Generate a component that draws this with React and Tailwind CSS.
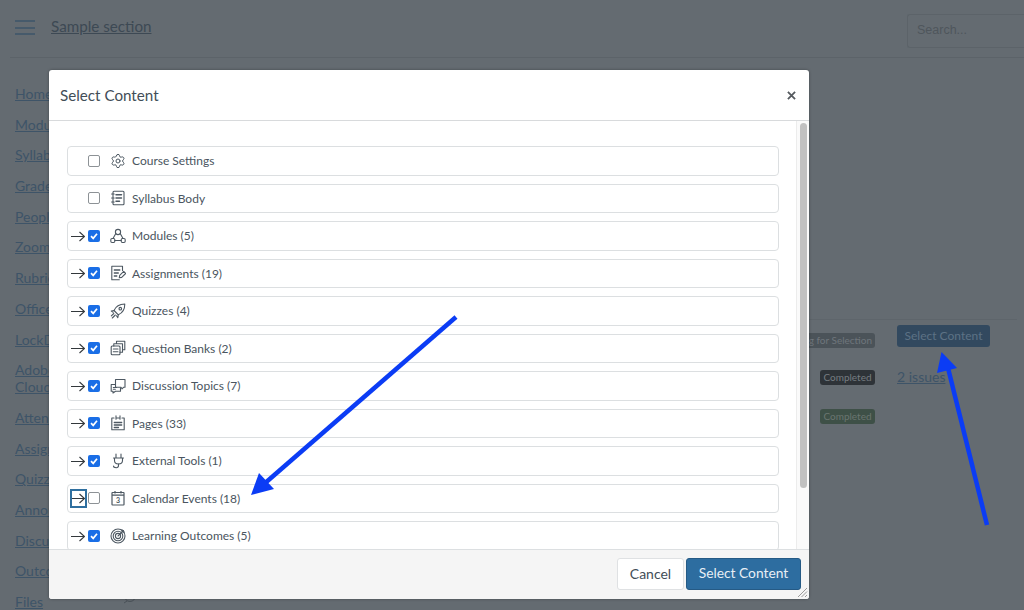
import { Settings } from "lucide-react";

const navItems = [
  ["Home"], ["Modules"], ["Syllabus"], ["Grades"], ["People"], ["Zoom"], ["Rubrics"], ["Office Hours"],
  ["LockDown Browser"], ["Adobe", "Cloud"], ["Attendance"], ["Assignments"], ["Quizzes"], ["Announcements"],
  ["Discussions"], ["Outcomes"], ["Files"],
];

const S = ({ children }) => (
  <svg width="16" height="16" viewBox="0 0 16 16" fill="none" stroke="#4d5862" strokeWidth="1.1" strokeLinecap="round" strokeLinejoin="round">
    {children}
  </svg>
);

const Gear = () => <Settings size={16} color="#4d5862" strokeWidth={1.5} />;
const Syllabus = () => (
  <S>
    <rect x="3" y="1.2" width="11" height="13.6" rx="1" />
    <path d="M1.6 4h2.6M1.6 8h2.6M1.6 12h2.6" />
    <path d="M6 4.8h5.5M6 8h5.5M6 11.200h3.5" strokeWidth="1.5" />
  </S>
);
const Modules = () => (
  <S>
    <circle cx="8" cy="4" r="2.6" />
    <rect x="0.8" y="10.5" width="4" height="4" rx="1.2" />
    <rect x="11.2" y="10.5" width="4" height="4" rx="1.2" />
    <path d="M5.8 5.500 3 10.500M10.200 5.500l2.800 5M4.800 12.500h6.400" />
  </S>
);
const Assignments = () => (
  <S>
    <path d="M12.500 5.500V1.300H1.800v13.400h7.500" />
    <path d="M4.300 5h5.500M4.300 8h4M4.300 11h2.500" strokeWidth="1.3" />
    <path d="m9.300 12.800.400-2.400 4-4 2 2-4 4z" />
  </S>
);
const Rocket = () => (
  <S>
    <path d="M5.500 9 4 7.500c1.500-3.500 5-6.300 10.800-6.500 0 5.800-3 9.300-6.500 10.800z" />
    <circle cx="10.300" cy="5.700" r="1.300" />
    <path d="M4.200 7.500 1.300 8l1.900 1.300M8.300 11.800l-.5 2.900-1.300-1.900M3.800 10.500 1.300 12.800M5.300 12l-3 3" />
  </S>
);
const Banks = () => (
  <S>
    <rect x="1.200" y="6" width="8.800" height="8.800" rx="1" />
    <path d="M3.800 6V3.700h8.700v8.600H10M6.500 3.700V1.300h8.300v8.500h-2.300" />
    <path d="M3.300 9h4.700M3.300 11.700h4.700" />
  </S>
);
const Discussion = () => (
  <S>
    <path d="M5.500 6.500H1.200v6.700h1.800v1.800l2.500-1.800h5V9.800" />
    <path d="M5.500 1.500h9.500v7.800h-1.500l-1.500 1.500-1-1.500H5.500z" />
    <path d="M3.300 9.500h3.200M3.300 11.200h2" />
  </S>
);
const Pages = () => (
  <S>
    <path d="M4 3H1.800v11.800h12.400V3H12" />
    <path d="M6 .9v3.400M10 .9v3.400M6 3h4" />
    <path d="M4.300 7.500h7.400M4.300 10h7.400M4.300 12.500h4.200" strokeWidth="1.3" />
  </S>
);
const Plug = () => (
  <S>
    <path d="M6 1v4M11 1v4M3.500 5h10M4.500 5v2.500c0 2 1.800 3.500 4 3.500s4-1.500 4-3.500V5" />
    <path d="M8.500 11v1.500c0 1.500-1 2.200-2.200 2.200S3.500 14 3.500 13" />
  </S>
);
const Calendar = () => (
  <svg width="16" height="16" viewBox="0 0 16 16" fill="none" stroke="#4d5862" strokeWidth="1.200">
    <rect x="2" y="2.500" width="12" height="12.500" rx="0.500" />
    <path d="M2 5.200h12M5 1v2.500M11 1v2.500" />
    <text x="8" y="13" textAnchor="middle" fontSize="7" fontWeight="700" fill="#4d5862" stroke="none" fontFamily="Lato, sans-serif">3</text>
  </svg>
);
const Target = () => (
  <S>
    <circle cx="8" cy="8" r="7" />
    <circle cx="8" cy="8" r="4.800" />
    <circle cx="8" cy="8" r="2.600" />
    <path d="M8 8l5.500-5.500M12 1.500V4h2.500" />
  </S>
);

const rows = [
  { label: "Course Settings", Icon: Gear, mark: false, checked: false },
  { label: "Syllabus Body", Icon: Syllabus, mark: false, checked: false },
  { label: "Modules (5)", Icon: Modules, mark: true, checked: true },
  { label: "Assignments (19)", Icon: Assignments, mark: true, checked: true },
  { label: "Quizzes (4)", Icon: Rocket, mark: true, checked: true },
  { label: "Question Banks (2)", Icon: Banks, mark: true, checked: true },
  { label: "Discussion Topics (7)", Icon: Discussion, mark: true, checked: true },
  { label: "Pages (33)", Icon: Pages, mark: true, checked: true },
  { label: "External Tools (1)", Icon: Plug, mark: true, checked: true },
  { label: "Calendar Events (18)", Icon: Calendar, mark: true, checked: false, focus: true },
  { label: "Learning Outcomes (5)", Icon: Target, mark: true, checked: true },
];

const Mark = () => (
  <svg width="14" height="11" viewBox="0 0 14 11" fill="none" stroke="#33383c" strokeWidth="1.1">
    <path d="M0 5.500h13.500M8.500 1l5 4.500-5 4.500" />
  </svg>
);

const Check = ({ checked }) =>
  checked ? (
    <span className="flex h-[12px] w-[12px] shrink-0 items-center justify-center rounded-[2px] bg-[#1a6ee6]">
      <svg width="10" height="10" viewBox="0 0 10 10" fill="none" stroke="#fff" strokeWidth="1.7">
        <path d="M2 5.200 4.200 7.400 8 2.800" />
      </svg>
    </span>
  ) : (
    <span className="h-[12px] w-[12px] shrink-0 rounded-[2px] border border-[#8d9296] bg-white" />
  );

const Row = ({ label, Icon, mark, checked, focus }) => (
  <div className="relative flex h-[29.5px] shrink-0 items-center rounded-[4px] border border-[#dcdfe1] bg-white pl-[20px]">
    {mark && (
      <span className="absolute left-[3px] top-[8.5px]">
        <Mark />
      </span>
    )}
    {focus && <span className="absolute left-[2px] top-[4px] h-[19px] w-[17px] border-2 border-[#2f6f9f]" />}
    <Check checked={checked} />
    <span className="ml-[10px] flex w-[16px] justify-center">
      <Icon />
    </span>
    <span className="ml-[6px] pt-[1px] text-[12px] text-[#4a5560]">{label}</span>
  </div>
);

export default function App() {
  return (
    <div className="relative h-[610px] w-[1024px] overflow-hidden bg-[#646b71] font-['Lato',sans-serif]">
      {/* dimmed page */}
      <header className="ml-[10px] flex h-[58px] items-center border-b border-[#5c6369] pl-[5px]">
        <div className="mb-[2px] mr-[1px] flex w-[20px] flex-col gap-[4.5px]">
          <span className="h-[2px] bg-[#465a6b]" />
          <span className="h-[2px] bg-[#465a6b]" />
          <span className="h-[2px] bg-[#465a6b]" />
        </div>
        <a className="mb-[4px] ml-[15px] text-[15.2px] text-[#3d4954] underline">Sample section</a>
        <div className="ml-auto mt-[4px] flex h-[34px] w-[117px] items-center rounded-l-[3px] border border-r-0 border-[#5c6369] pl-[9px] font-['Liberation_Sans',sans-serif] text-[12.5px] text-[#4f565c]">
          Search...
        </div>
      </header>

      <main className="flex">
        <nav className="ml-[15px] flex w-[122px] flex-col gap-[13.7px] pt-[27px]">
          {navItems.map((lines) => (
            <div key={lines[0]} className="flex items-start justify-between">
              <a className="text-[14px] leading-[17px] text-[#3e5468] underline">
                {lines.map((l) => (
                  <span key={l} className="block whitespace-nowrap">{l}</span>
                ))}
              </a>
              {lines[0] === "Files" && (
                <svg className="mt-[-3px]" width="14" height="14" viewBox="0 0 14 14" fill="none" stroke="#4a5259" strokeWidth="1">
                  <circle cx="7" cy="6" r="5.500" />
                  <path d="M4 11 1 13M3 6h8" />
                </svg>
              )}
            </div>
          ))}
        </nav>
        <section className="ml-auto w-[220px] pr-[7px] pt-[261px]">
          <div className="border-t border-[#5e656b] pt-[5px]">
            <div className="flex h-[22px] items-center justify-end pr-[27px]">
              <span className="mt-[8px] flex h-[15px] items-center rounded-[3px] bg-[#4b5359] px-[3px] text-[10px] whitespace-nowrap text-[#6f767c]">
                Waiting for Selection
              </span>
              <span className="ml-[22px] flex h-[22px] w-[93px] shrink-0 items-center justify-center rounded-[3px] bg-[#32495f] text-[12px] text-[#5d7285]">
                Select Content
              </span>
            </div>
            <div className="mt-[20px] flex h-[20px] items-center">
              <span className="ml-[16px] flex h-[15px] w-[55px] items-center justify-center rounded-[3px] bg-[#2e3338] text-[10px] text-[#767c81]">
                Completed
              </span>
              <a className="ml-[22px] mb-[2px] text-[14px] text-[#3e5468] underline">2 issues</a>
            </div>
            <div className="mt-[22px] flex h-[15px]">
              <span className="ml-[16px] flex h-[15px] w-[55px] items-center justify-center rounded-[3px] bg-[#3e5047] text-[10px] text-[#6a7570]">
                Completed
              </span>
            </div>
          </div>
        </section>
      </main>

      {/* modal */}
      <div className="absolute left-[49px] top-[70px] flex h-[529px] w-[760px] flex-col overflow-hidden rounded-[3px] bg-white shadow-[0_0_3px_rgba(0,0,0,0.35)]">
        <div className="flex h-[51px] shrink-0 items-center justify-between border-b border-[#d8dadc] pl-[11px] pr-[13px]">
          <h2 className="text-[15.2px] text-[#424d57]">Select Content</h2>
          <svg width="9" height="9" viewBox="0 0 10 10" fill="none" stroke="#555a5f" strokeWidth="2">
            <path d="M1 1l8 8M9 1 1 9" />
          </svg>
        </div>
        <div className="flex min-h-0 flex-1">
          <div className="flex flex-1 flex-col gap-2 overflow-hidden pb-0 pl-[18px] pr-[17px] pt-[25px]">
            {rows.map((r) => (
              <Row key={r.label} {...r} />
            ))}
          </div>
          <div className="h-full w-[13px] shrink-0 border-l border-[#ececec] bg-[#fafafa] pl-[3px] pt-[2px]">
            <div className="h-[365px] w-[7px] rounded-[4px] bg-[#c1c1c1]" />
          </div>
        </div>
        <div className="relative flex h-[50px] shrink-0 items-center justify-end gap-[2px] border-t border-[#dcdfe1] bg-[#f5f5f5] pb-[2px] pr-[8px]">
          <button className="h-[32px] w-[67px] rounded-[3px] border border-[#dfe1e3] bg-white text-[14px] text-[#424d57]">
            Cancel
          </button>
          <button className="h-[32px] w-[115px] rounded-[3px] border border-[#255a85] bg-[#2d6da0] text-[13.8px] text-[#e8eff5]">
            Select Content
          </button>
          <svg className="absolute bottom-[1px] right-[1px]" width="11" height="11" viewBox="0 0 11 11" stroke="#9a9a9a" strokeWidth="1">
            <path d="M1 10 10 1M4.500 10 10 4.500M8 10l2-2" />
          </svg>
        </div>
      </div>

      {/* annotation arrows */}
      <svg className="pointer-events-none absolute inset-0" width="1024" height="610" viewBox="0 0 1024 610">
        <path d="M456 317 264 484" stroke="#0b3cf5" strokeWidth="4.500" fill="none" />
        <path d="M251 495 259 473 274 489Z" fill="#0b3cf5" />
        <path d="M987 525 948 368" stroke="#0b3cf5" strokeWidth="4.500" fill="none" />
        <path d="M941.500 352 937 373 957 368Z" fill="#0b3cf5" />
      </svg>
    </div>
  );
}
